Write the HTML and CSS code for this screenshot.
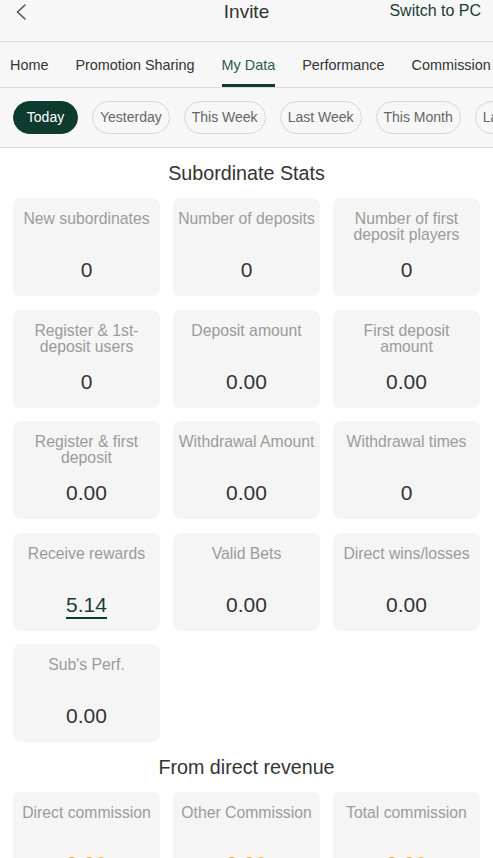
FILE: index.html
```html
<!DOCTYPE html>
<html lang="en">
<head>
<meta charset="utf-8">
<title>Invite</title>
<link rel="stylesheet" href="styles.css">
</head>
<body>
<header class="topbar">
  <div class="back">
    <svg width="12" height="16" viewBox="0 0 12 16" aria-hidden="true"><path d="M10 1 L2.5 8 L10 15" fill="none" stroke="#555" stroke-width="1.6" stroke-linecap="round" stroke-linejoin="round"/></svg>
  </div>
  <h1 class="title">Invite</h1>
  <a class="switch">Switch to PC</a>
</header>
<nav class="tabs">
  <span class="tab">Home</span>
  <span class="tab">Promotion Sharing</span>
  <span class="tab active">My Data</span>
  <span class="tab">Performance</span>
  <span class="tab">Commission</span>
  <span class="tab">Rules</span>
</nav>
<div class="chips">
  <span class="chip active">Today</span>
  <span class="chip">Yesterday</span>
  <span class="chip">This Week</span>
  <span class="chip">Last Week</span>
  <span class="chip">This Month</span>
  <span class="chip">Last Month</span>
</div>
<main class="content">
  <h2 class="section-title">Subordinate Stats</h2>
  <div class="grid">
    <div class="card"><div class="label">New subordinates</div><div class="value">0</div></div>
    <div class="card"><div class="label">Number of deposits</div><div class="value">0</div></div>
    <div class="card"><div class="label">Number of first deposit players</div><div class="value">0</div></div>
    <div class="card"><div class="label">Register &amp; 1st-deposit users</div><div class="value">0</div></div>
    <div class="card"><div class="label">Deposit amount</div><div class="value">0.00</div></div>
    <div class="card"><div class="label">First deposit<br>amount</div><div class="value">0.00</div></div>
    <div class="card"><div class="label">Register &amp; first deposit</div><div class="value">0.00</div></div>
    <div class="card"><div class="label">Withdrawal Amount</div><div class="value">0.00</div></div>
    <div class="card"><div class="label">Withdrawal times</div><div class="value">0</div></div>
    <div class="card"><div class="label">Receive rewards</div><div class="value"><span class="link">5.14</span></div></div>
    <div class="card"><div class="label">Valid Bets</div><div class="value">0.00</div></div>
    <div class="card"><div class="label">Direct wins/losses</div><div class="value">0.00</div></div>
    <div class="card"><div class="label">Sub's Perf.</div><div class="value">0.00</div></div>
  </div>
  <h2 class="section-title">From direct revenue</h2>
  <div class="grid">
    <div class="card"><div class="label">Direct commission</div><div class="value orange">0.00</div></div>
    <div class="card"><div class="label">Other Commission</div><div class="value orange">0.00</div></div>
    <div class="card"><div class="label">Total commission</div><div class="value orange">0.00</div></div>
  </div>
</main>
</body>
</html>
```

FILE: styles.css
```css
* { box-sizing: border-box; }
html, body { margin: 0; padding: 0; }
body {
  font-family: "Liberation Sans", Arial, sans-serif;
  background: #ffffff;
  color: #333;
  width: 493px;
  overflow-x: hidden;
}
.topbar {
  display: grid;
  grid-template-columns: 1fr auto 1fr;
  align-items: start;
  height: 42px;
  background: #f7f7f7;
  border-bottom: 1px solid #dcdcdc;
}
.back {
  padding: 4px 0 0 15px;
  height: 24px;
}
.back svg { display: block; }
.title {
  margin: 0;
  font-size: 19px;
  font-weight: normal;
  line-height: 24px;
  color: #333;
}
.switch {
  justify-self: end;
  padding-right: 12px;
  font-size: 16px;
  line-height: 22px;
  color: #1c3d32;
}
.tabs {
  display: flex;
  gap: 27px;
  padding-left: 10px;
  height: 46px;
  background: #f7f7f7;
  border-bottom: 1px solid #dcdcdc;
  white-space: nowrap;
  overflow: hidden;
}
.tab {
  flex: none;
  display: flex;
  align-items: center;
  height: 45px;
  padding-top: 3px;
  border-bottom: 3px solid transparent;
  font-size: 14.4px;
  color: #333;
}
.tab.active {
  color: #2f5a49;
  border-bottom-color: #0d3b2e;
}
.chips {
  display: flex;
  gap: 14px;
  padding: 13px 13px;
  height: 60px;
  background: #f7f7f7;
  border-bottom: 1px solid #dcdcdc;
  overflow: hidden;
  white-space: nowrap;
}
.chip {
  flex: none;
  display: flex;
  align-items: center;
  justify-content: center;
  min-width: 65px;
  height: 33px;
  padding: 0 7px 1px;
  border: 1px solid #d6d6d6;
  border-radius: 17px;
  font-size: 14px;
  color: #666;
}
.chip.active {
  background: #0d3b2e;
  border-color: #0d3b2e;
  color: #fff;
}
.content { padding: 0 13px; }
.section-title {
  margin: 0;
  height: 50px;
  line-height: 50px;
  text-align: center;
  font-size: 19.7px;
  font-weight: normal;
  color: #333;
}
.grid {
  display: grid;
  grid-template-columns: repeat(3, 1fr);
  column-gap: 13px;
  row-gap: 13.5px;
}
.card {
  background: #f5f5f5;
  border-radius: 8px;
  padding: 13px 4px 0;
  height: 98px;
  text-align: center;
}
.label {
  height: 32px;
  font-size: 15.75px;
  line-height: 16px;
  color: #9b9b9b;
}
.value {
  margin-top: 15px;
  font-size: 21px;
  line-height: 24px;
  color: #333;
}
.value .link {
  color: #1c3d32;
  border-bottom: 2px solid #0d3b2e;
  padding-bottom: 1px;
}
.value.orange { color: #f2a922; }
```
